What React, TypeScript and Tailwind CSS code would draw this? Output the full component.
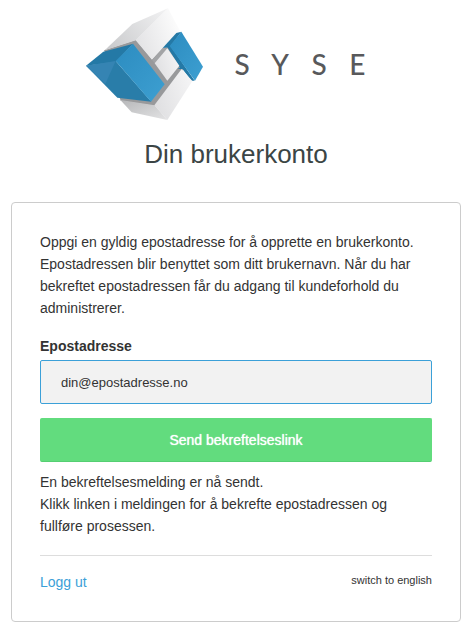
import { useState } from 'react';
import type { FormEvent } from 'react';

function Logo() {
  return (
    <svg
      viewBox="18 24 903 336"
      className="w-[301px] h-[112px] max-w-full"
      role="img"
      aria-label="Syse"
    >
      <defs>
        <linearGradient id="topFace" x1="0" y1="0.7" x2="1" y2="0.2">
          <stop offset="0" stopColor="#cbccce" />
          <stop offset="1" stopColor="#f0f0f1" />
        </linearGradient>
        <linearGradient id="whiteFace" x1="0" y1="0.7" x2="1" y2="0.3">
          <stop offset="0" stopColor="#e2e2e4" />
          <stop offset="1" stopColor="#fdfdfd" />
        </linearGradient>
        <linearGradient id="paleFace" x1="0" y1="0.7" x2="1" y2="0.3">
          <stop offset="0" stopColor="#dfdfe1" />
          <stop offset="1" stopColor="#f4f4f5" />
        </linearGradient>
        <linearGradient id="blueFace" x1="0" y1="0" x2="1" y2="1">
          <stop offset="0" stopColor="#2c8cc0" />
          <stop offset="1" stopColor="#3d9fd1" />
        </linearGradient>
        <linearGradient id="bottomFace" x1="0" y1="0" x2="1" y2="1">
          <stop offset="0" stopColor="#b6b7b9" />
          <stop offset="1" stopColor="#e4e4e5" />
        </linearGradient>
      </defs>

      {/* shadow gaps between the blocks */}
      <path d="M72 151 168 119 216 178 248 144 268 140 304 204 310 210 226 318 122 302 118 290 212 300 250 254 158 135 78 162 Z" fill="#98999b" />

      {/* top block */}
      <path d="M74 151 157 72 264 25 168 121 Z" fill="url(#topFace)" />
      <path d="M167 121 264 25 300 92 248 145 216 179 Z" fill="url(#whiteFace)" />

      {/* left block */}
      <path d="M18 197 70 155 160 131 108 186 Z" fill="#2479a6" />
      <path d="M18 197 107 183 214 305 112 293 Z" fill="#297da9" />
      <path d="M18 197 107 183 76 252 Z" fill="#3584b3" />
      <path d="M107 183 159 131 254 253 213 305 Z" fill="url(#blueFace)" />

      {/* right block */}
      <path d="M248 144 289 99 304 95 270 142 Z" fill="#2479a6" />
      <path d="M262 141 300 203 292 206 308 208 334 242 344 242 270 135 Z" fill="#2479a6" />
      <path d="M269 138 304 95 369 200 345 242 Z" fill="url(#blueFace)" />

      {/* middle block */}
      <path d="M216 179 248 144 264 145 224 190 Z" fill="#a3a4a6" />
      <path d="M224 190 262 145 298 197 262 242 Z" fill="url(#paleFace)" />

      {/* bottom block */}
      <path d="M121 300 224 316 262 360 155 337 Z" fill="url(#bottomFace)" />
      <path d="M223 316 305 207 337 243 262 360 Z" fill="url(#paleFace)" />

      <g className="font-['Lato',sans-serif] font-medium" fontSize="84" textAnchor="middle" fill="#58595b">
        <text x="486" y="225">S</text>
        <text x="600" y="225">Y</text>
        <text x="717" y="225">S</text>
        <text x="832" y="225">E</text>
      </g>
    </svg>
  );
}

export default function App() {
  const [email, setEmail] = useState('din@epostadresse.no');

  const handleSubmit = (e: FormEvent) => {
    e.preventDefault();
  };

  return (
    <main className="pt-2 pl-[11px] pr-3 pb-2 bg-white font-['Liberation_Sans',Arial,sans-serif] text-sm leading-[22px] text-[#333333]">
      <header className="flex flex-col items-center">
        <Logo />
        <h1 className="mt-4 text-[26px] leading-9 text-[#3b4545]">Din brukerkonto</h1>
      </header>

      <section className="mt-[30px] p-7 border border-[#cccccc] rounded">
        <p>
          Oppgi en gyldig epostadresse for å opprette en brukerkonto. Epostadressen blir benyttet
          som ditt brukernavn. Når du har bekreftet epostadressen får du adgang til kundeforhold du
          administrerer.
        </p>

        <form onSubmit={handleSubmit} className="mt-4">
          <label htmlFor="email" className="block font-bold">
            Epostadresse
          </label>
          <input
            id="email"
            type="email"
            value={email}
            onChange={(e) => setEmail(e.target.value)}
            className="block mt-[3px] w-full h-11 px-5 bg-[#f2f2f2] border border-[#3ba0d8] rounded-[2px] text-[13px] outline-none"
          />
          <button
            type="submit"
            className="block mt-3.5 w-full h-11 bg-[#62dc7e] border border-[#62dc7e] border-b-[#55cf72] rounded-[2px] text-white [text-shadow:0_0_1px_#ffffff]"
          >
            Send bekreftelseslink
          </button>
        </form>

        <p className="mt-[9px]">
          En bekreftelsesmelding er nå sendt.
          <br />
          Klikk linken i meldingen for å bekrefte epostadressen og fullføre prosessen.
        </p>

        <footer className="mt-[18px] pt-[15px] flex justify-between items-start border-t border-[#dddddd]">
          <a href="#logout" className="text-[#3ba0d8]">
            Logg ut
          </a>
          <a href="#english" className="text-[11px] leading-[18px]">
            switch to english
          </a>
        </footer>
      </section>
    </main>
  );
}
